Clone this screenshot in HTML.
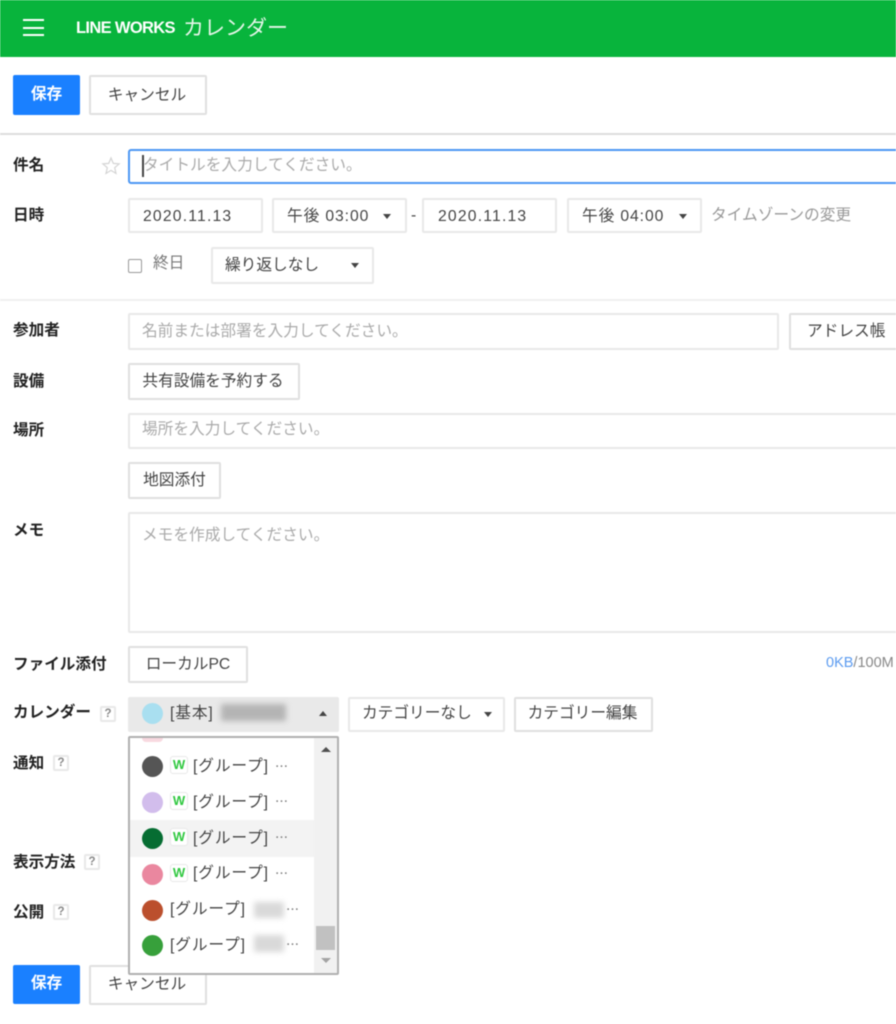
<!DOCTYPE html>
<html lang="ja">
<head>
<meta charset="utf-8">
<title>LINE WORKS カレンダー</title>
<style>
html,body{margin:0;padding:0;background:#fff;}
#p{position:relative;width:896px;height:1024px;overflow:hidden;background:#fff;font-family:"Liberation Sans","Noto Sans CJK JP",sans-serif;font-size:15.7px;color:#444;filter:blur(.5px);}
#p div,#p span.a{position:absolute;box-sizing:border-box;white-space:nowrap;}
.b{background:#fff;border:2px solid #e8e8e8;border-radius:2px;line-height:32px;}
.n{letter-spacing:.9px;line-height:34px;}
.btn{background:#fff;border:2px solid #e0e0e0;border-radius:2px;text-align:center;color:#444;}
.l{font-weight:bold;color:#222;font-size:15.6px;line-height:22px;left:13px;}
.ph{color:#aaa;}
.q{width:16px;height:16px;border:2px solid #e8e8e8;border-radius:2px;font-size:11.5px;line-height:12px;text-align:center;color:#888;font-weight:bold;}
.tri{width:0;height:0;border-left:4px solid transparent;border-right:4px solid transparent;border-top:5px solid #444;}
.c{width:21px;height:21px;border-radius:50%;left:142px;}
.w{left:170px;width:18px;height:18px;border:1px solid #e8e8e8;border-radius:3px;background:#fff;color:#2fc83f;font-size:13px;font-weight:bold;line-height:15px;text-align:center;}
.t{font-size:15.7px;color:#444;line-height:24px;letter-spacing:.9px;}
.d{color:#777;font-size:13px;line-height:20px;letter-spacing:0;}
.sm{filter:blur(3px);background:#c9c9c9;}
</style>
</head>
<body>
<div id="p">
  <div style="left:0;top:0;width:896px;height:57px;background:#08b43c;"></div>
  <div style="left:23px;top:19px;width:21px;height:2px;background:#fff;"></div>
  <div style="left:23px;top:26.5px;width:21px;height:2px;background:#fff;"></div>
  <div style="left:23px;top:34px;width:21px;height:2px;background:#fff;"></div>
  <div style="left:76px;top:17px;font-size:16.5px;font-weight:bold;color:#fff;line-height:22px;letter-spacing:-.65px;">LINE WORKS</div>
  <div style="left:183px;top:14px;font-size:21px;color:#e4f6e8;line-height:30px;">カレンダー</div>

  <div style="left:13px;top:75px;width:67px;height:40px;background:#1a80ff;border-radius:2px;color:#fff;font-weight:bold;text-align:center;line-height:40px;">保存</div>
  <div class="btn" style="left:89px;top:75px;width:118px;height:40px;line-height:37px;padding-right:2px;">キャンセル</div>
  <div style="left:0;top:133px;width:896px;height:2px;background:#dcdcdc;"></div>

  <div class="l" style="top:155px;">件名</div>
  <svg style="position:absolute;left:101px;top:156px;" width="20" height="20" viewBox="0 0 20 20"><path d="M10 2l2.3 5.4 5.8.5-4.4 3.8 1.3 5.7-5-3-5 3 1.3-5.7-4.4-3.8 5.8-.5z" fill="none" stroke="#d4d4d4" stroke-width="1.2"/></svg>
  <div style="left:128px;top:149px;width:790px;height:35px;border:2px solid #4d97f3;border-radius:3px;background:#fff;"></div>
  <div style="left:142px;top:155px;width:1.5px;height:22px;background:#444;"></div>
  <div class="ph" style="left:143px;top:155px;line-height:22px;">タイトルを入力してください。</div>

  <div class="l" style="top:205px;">日時</div>
  <div class="b n" style="left:128px;top:198px;width:135px;height:35px;padding-left:13px;letter-spacing:1.2px;">2020.11.13</div>
  <div class="b n" style="left:272px;top:198px;width:135px;height:35px;padding-left:13px;">午後 03:00</div>
  <div class="tri" style="left:383px;top:214px;"></div>
  <div style="left:411px;top:206px;line-height:20px;">-</div>
  <div class="b n" style="left:422px;top:198px;width:135px;height:35px;padding-left:14px;letter-spacing:1.2px;">2020.11.13</div>
  <div class="b n" style="left:567px;top:198px;width:135px;height:35px;padding-left:13px;">午後 04:00</div>
  <div class="tri" style="left:679px;top:214px;"></div>
  <div style="left:711px;top:205px;line-height:22px;color:#999;">タイムゾーンの変更</div>

  <div style="left:128px;top:259px;width:14px;height:14px;border:1.5px solid #999;border-radius:2px;background:#fff;"></div>
  <div style="left:153px;top:254px;line-height:20px;color:#777;">終日</div>
  <div class="b" style="left:211px;top:247px;width:163px;height:37px;padding-left:12px;line-height:33px;">繰り返しなし</div>
  <div class="tri" style="left:351px;top:263px;"></div>
  <div style="left:0;top:299px;width:896px;height:1.5px;background:#f0f0f0;"></div>

  <div class="l" style="top:320px;">参加者</div>
  <div class="b ph" style="left:128px;top:313px;width:651px;height:37px;padding-left:12px;line-height:33px;">名前または部署を入力してください。</div>
  <div class="btn" style="left:789px;top:313px;width:120px;height:37px;line-height:33px;text-align:left;padding-left:16px;">アドレス帳</div>

  <div class="l" style="top:371px;">設備</div>
  <div class="btn" style="left:128px;top:363px;width:172px;height:37px;line-height:34px;padding-right:2px;">共有設備を予約する</div>

  <div class="l" style="top:420px;">場所</div>
  <div class="b ph" style="left:128px;top:413px;width:790px;height:36px;padding-left:12px;line-height:30px;">場所を入力してください。</div>
  <div class="btn" style="left:128px;top:462px;width:93px;height:37px;line-height:34px;">地図添付</div>

  <div class="l" style="top:520px;">メモ</div>
  <div class="b ph" style="left:128px;top:512px;width:790px;height:121px;padding:6px 0 0 12px;">メモを作成してください。</div>

  <div class="l" style="top:654px;">ファイル添付</div>
  <div class="btn" style="left:128px;top:646px;width:120px;height:37px;line-height:33px;">ローカルPC</div>
  <div style="left:826px;top:654px;font-size:14.5px;line-height:18px;color:#888;"><span style="color:#5b9bf0;">0KB</span>/100M</div>

  <div class="l" style="top:702px;">カレンダー</div>
  <div class="q" style="left:100px;top:706px;">?</div>
  <div style="left:128px;top:697px;width:211px;height:35px;background:#e9e9e9;border-radius:2px;"></div>
  <div class="c" style="top:703px;background:#a9dff0;"></div>
  <div class="t" style="left:170px;top:702px;">[基本]</div>
  <div class="sm" style="left:221px;top:704px;width:65px;height:17px;background:#b4b4b4;"></div>
  <div class="tri" style="left:319px;top:711px;border-top:0;border-bottom:5px solid #444;"></div>
  <div class="b" style="left:348px;top:697px;width:157px;height:35px;padding-left:12px;line-height:30px;">カテゴリーなし</div>
  <div class="tri" style="left:484px;top:712px;"></div>
  <div class="btn" style="left:514px;top:697px;width:139px;height:35px;line-height:30px;padding-right:2px;">カテゴリー編集</div>

  <div class="l" style="top:753px;">通知</div>
  <div class="q" style="left:53px;top:755px;">?</div>
  <div class="l" style="top:852px;">表示方法</div>
  <div class="q" style="left:84px;top:854px;">?</div>
  <div class="l" style="top:902px;">公開</div>
  <div class="q" style="left:53px;top:904px;">?</div>

  <div style="left:13px;top:965px;width:67px;height:39px;background:#1a80ff;border-radius:2px;color:#fff;font-weight:bold;text-align:center;line-height:37px;">保存</div>
  <div class="btn" style="left:89px;top:965px;width:118px;height:40px;line-height:35px;padding-right:2px;">キャンセル</div>

  <!-- dropdown -->
  <div style="left:128px;top:736px;width:211px;height:239px;background:#fff;border:2px solid #b0b0b0;border-radius:2px;"></div>
  <div style="left:314px;top:738px;width:23px;height:235px;background:#f1f1f1;"></div>
  <div class="tri" style="left:321px;top:747px;border-top:0;border-bottom:5px solid #505050;border-left-width:5px;border-right-width:5px;"></div>
  <div style="left:316px;top:926px;width:19px;height:24px;background:#c1c1c1;"></div>
  <div class="tri" style="left:321px;top:958px;border-top:5px solid #a3a3a3;border-left-width:5px;border-right-width:5px;"></div>
  <div style="left:130px;top:820px;width:184px;height:37px;background:#f3f3f3;"></div>
  <div style="left:142px;top:738px;width:21px;height:4px;background:#f8d9e0;border-radius:0 0 10px 10px;"></div>

  <div class="c" style="top:756px;background:#555555;"></div>
  <div class="w" style="top:756px;">W</div>
  <div class="t" style="left:193px;top:755px;">[グループ]</div>
  <div class="d" style="left:275px;top:757px;">⋯</div>

  <div class="c" style="top:792px;background:#d2bdec;"></div>
  <div class="w" style="top:792px;">W</div>
  <div class="t" style="left:193px;top:791px;">[グループ]</div>
  <div class="d" style="left:275px;top:792px;">⋯</div>

  <div class="c" style="top:828px;background:#066d32;"></div>
  <div class="w" style="top:828px;">W</div>
  <div class="t" style="left:193px;top:827px;">[グループ]</div>
  <div class="d" style="left:275px;top:828px;">⋯</div>

  <div class="c" style="top:864px;background:#ea879f;"></div>
  <div class="w" style="top:864px;">W</div>
  <div class="t" style="left:193px;top:862px;">[グループ]</div>
  <div class="d" style="left:275px;top:864px;">⋯</div>

  <div class="c" style="top:900px;background:#bb4f2d;"></div>
  <div class="t" style="left:170px;top:898px;">[グループ]</div>
  <div class="sm" style="left:254px;top:902px;width:30px;height:16px;background:#d9d9d9;"></div>
  <div class="d" style="left:286px;top:900px;">⋯</div>

  <div class="c" style="top:935px;background:#37a03b;"></div>
  <div class="t" style="left:170px;top:934px;">[グループ]</div>
  <div class="sm" style="left:254px;top:935px;width:30px;height:17px;background:#d9d9d9;"></div>
  <div class="d" style="left:286px;top:935px;">⋯</div>
</div>
</body>
</html>
